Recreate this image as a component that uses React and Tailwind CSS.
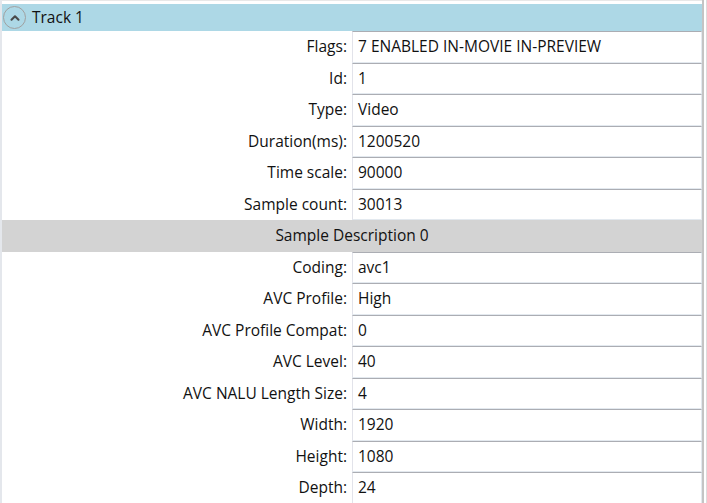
import { ChevronUp } from 'lucide-react'

const TRACK = [
  ['Flags', '7 ENABLED IN-MOVIE IN-PREVIEW'],
  ['Id', '1'],
  ['Type', 'Video'],
  ['Duration(ms)', '1200520'],
  ['Time scale', '90000'],
  ['Sample count', '30013'],
]

const SAMPLE = [
  ['Coding', 'avc1'],
  ['AVC Profile', 'High'],
  ['AVC Profile Compat', '0'],
  ['AVC Level', '40'],
  ['AVC NALU Length Size', '4'],
  ['Width', '1920'],
  ['Height', '1080'],
  ['Depth', '24'],
]

function Row({ label, value }) {
  return (
    <div className="flex h-[31.5px] shrink-0">
      <div className="w-[350px] shrink-0 flex items-center justify-end pr-[5px] text-[#111]">{label}:</div>
      <div className="flex-1 flex items-center px-[5px] bg-white border border-[#e3e9ef] border-t-[#abadb3] border-l-[#e2e3ea] text-[#111]">
        {value}
      </div>
    </div>
  )
}

export default function App() {
  return (
    <div className="w-[707px] h-[503px] overflow-hidden bg-white flex text-[15.5px]" style={{ fontFamily: '"Open Sans", "Noto Sans", sans-serif' }}>
      <div className="w-[2px] shrink-0 bg-[#e4e7ec]" />
      <div className="flex-1 flex flex-col pt-[3px] border-t border-[#e8e8e8]">
        <div className="h-[27px] shrink-0 bg-[#add8e6] flex items-center gap-[6px] pl-[1px]">
          <div className="w-[23px] h-[23px] shrink-0 rounded-full border-[1.5px] border-[#a0a0a0] flex items-center justify-center">
            <ChevronUp className="w-[14px] h-[14px] text-[#4a4a4a]" strokeWidth={3.5} />
          </div>
          <span className="text-[15.5px] text-[#111]">Track 1</span>
        </div>
        {TRACK.map(([l, v]) => <Row key={l} label={l} value={v} />)}
        <div className="h-[31.5px] shrink-0 bg-[#d3d3d3] flex items-center justify-center text-[#111]">Sample Description 0</div>
        {SAMPLE.map(([l, v]) => <Row key={l} label={l} value={v} />)}
      </div>
      <div className="w-[5px] shrink-0 flex">
        <div className="w-[2px] bg-[#c4c4c4]" />
        <div className="w-[2px] bg-white" />
        <div className="w-[1px] bg-[#dcdcdc]" />
      </div>
    </div>
  )
}
